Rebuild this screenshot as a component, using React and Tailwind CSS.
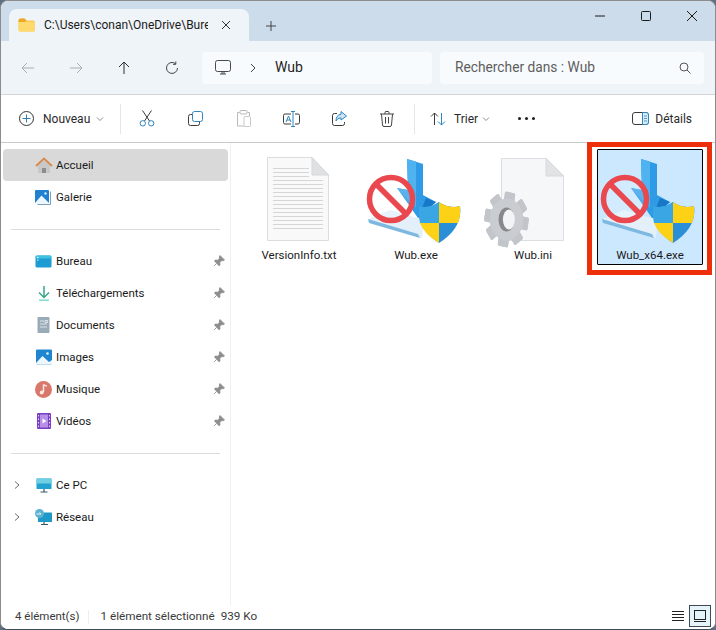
import React from "react";

const S = ({ children, w = 16, h = 16, vb, className = "" }) => (
  <svg width={w} height={h} viewBox={vb || `0 0 ${w} ${h}`} fill="none" className={`shrink-0 ${className}`}>{children}</svg>
);

const Folder = () => (
  <S w={17} h={14}>
    <path d="M0.5 2.5q0-2 2-2h4l2 2h6.5q2 0 2 2v7.5q0 1.500-2 1.500h-12.500q-2 0-2-1.500z" fill="#fbc84b" />
    <path d="M0.500 4h16.500v8q0 1.500-2 1.500h-12.500q-2 0-2-1.500z" fill="#fdd96e" />
    <path d="M0.500 2.500q0-2 2-2h4l2 2-2 1.500h-6z" fill="#e9a92e" />
  </S>
);

const ExeIcon = () => (
  <svg width="96" height="88" viewBox="0 0 96 88" className="shrink-0">
    <path d="M2 61 L24 52 L58 62 L56 80 L50 78 Z" fill="#e3f0f9" />
    <path d="M2 61 L52 76 L54 80 L3 65 Z" fill="#7db8e0" />
    <path d="M41 1 L57 6 L57 37 L70 44 L52 60 L31 30 L42 32 Z" fill="#2f9be6" />
    <path d="M41 1 L50 3.500 L50 50 L42 32 Z" fill="#4fb3f0" />
    <path d="M31 30 L42 32 L50 50 Z" fill="#3fa6ea" />
    <path d="M52 60 L70 44 L60 40 Z" fill="#1878c8" />
    <circle cx="25" cy="41" r="21.500" fill="#ffffff" fillOpacity="0.15" stroke="#e8484e" strokeWidth="5.500" />
    <path d="M10 26 L40 56" stroke="#e8484e" strokeWidth="5.500" />
    <path d="M73 44 Q83 51 94 48 Q97 70 73 85 Q50 70 53 48 Q63 51 73 44 Z" fill="#2a8fd6" />
    <path d="M73 44 Q83 51 94 48 Q95 57 92 65 L73 65 Z" fill="#fcd116" />
    <path d="M73 65 L54 65 Q58 76 73 85 Z" fill="#fcd116" />
    <path d="M73 44 Q63 51 53 48 Q52 57 54 65 L73 65 Z" fill="#3aa6e4" />
  </svg>
);

const TxtIcon = () => (
  <svg width="62" height="84" viewBox="0 0 62 84" className="shrink-0">
    <path d="M0.500 0.500H45L61.500 18V83.500H0.500Z" fill="#f9f9fa" stroke="#dadcde" />
    <path d="M45 0.500V18H61.500Z" fill="#e0e1e3" stroke="#d5d7d9" />
    {[11, 15, 19, 23, 27, 31, 35, 39, 43, 47, 51, 55, 59, 63, 67, 71].map((y) => (
      <path key={y} d={`M6 ${y + 0.5}H${y < 22 ? 42 : 56}`} stroke="#d4d6d8" strokeWidth="1" />
    ))}
  </svg>
);

const IniIcon = () => (
  <svg width="80" height="90" viewBox="0 0 80 90" className="shrink-0">
    <path d="M17.500 0.500H62L79.500 18V82.500H17.500Z" fill="#f6f7f9" stroke="#dcdee1" />
    <path d="M62 0.500V18H79.500Z" fill="#e2e3e5" stroke="#d6d8db" />
    <g transform="translate(22.500 61.500) scale(0.8 1)">
      {[0, 45, 90, 135, 180, 225, 270, 315].map((a) => (
        <rect key={a} x="-6.500" y="-27.500" width="13" height="55" rx="2" fill="#c2c6cb" transform={`rotate(${a + 10})`} />
      ))}
      <circle r="21" fill="#c9ccd1" />
      <ellipse rx="10" ry="12" fill="#85888d" />
      <ellipse cx="3" rx="7.500" ry="10" fill="#f3f4f6" />
    </g>
  </svg>
);

const Pin = () => (
  <S w={12} h={12}>
    <path d="M7 0.500L11.500 5 10 5.800 8.700 5.500 6.800 7.500 7 10 6 10.800 1.500 6 2.300 5 4.700 5.200 6.500 3.300 6.200 2Z M3.500 8.500L1 11" fill="#8d8d8d" stroke="#8d8d8d" strokeWidth="0.800" />
  </S>
);

const Chevron = () => (
  <S w={10} h={10}><path d="M3 1.500L7 5 3 8.500" stroke="#6b6b6b" strokeWidth="1" /></S>
);

const Caret = () => (
  <S w={8} h={6}><path d="M1 1.500L4 4.500 7 1.500" stroke="#8a8a8a" strokeWidth="1" /></S>
);

const Home = () => (
  <S w={18} h={17}>
    <path d="M3 8.500V16H15V8.500L9 3Z" fill="#c8c8c8" />
    <path d="M7 11h4v5H7z" fill="#8d8d8d" />
    <path d="M1 9L9 1.500 17 9" stroke="#d98a4e" strokeWidth="2" />
  </S>
);

const Gallery = () => (
  <S w={17} h={17}>
    <path d="M15.500 2.500V15.500H2.500" stroke="#7aa0bd" strokeWidth="1" />
    <rect x="0" y="1" width="14" height="14" rx="1" fill="#1f81cf" />
    <path d="M0 14L6.500 6.500 14 14V15H0Z" fill="#eef7fd" />
    <circle cx="10.500" cy="4.500" r="1.200" fill="#d7eefc" />
  </S>
);

const Desktop = () => (
  <S w={17} h={13}>
    <rect x="0.500" y="0.500" width="16" height="12" rx="1.500" fill="#1d9cd3" />
    <rect x="0.500" y="0.500" width="16" height="3" rx="1.500" fill="#3fc1e0" />
    <path d="M2 2h1.500v1H2zM2 4.500h1.500v1H2z" fill="#e5f7fc" />
  </S>
);

const Download = () => (
  <S w={16} h={16}>
    <path d="M8 1V12M3 7.500L8 12.500 13 7.500" stroke="#39a889" strokeWidth="1.500" />
    <path d="M3 15.200H13" stroke="#6ed6c8" strokeWidth="1.300" />
  </S>
);

const Doc = () => (
  <S w={13} h={16}>
    <rect x="0.500" width="12" height="16" rx="1" fill="#9aabb8" />
    <path d="M3 4h4M3 7h7M3 10h7M8 3.500h2.500v2H8z" stroke="#e4eaee" strokeWidth="0.900" />
  </S>
);

const Picture = () => (
  <S w={16} h={16}>
    <rect width="16" height="15" y="0.500" rx="1" fill="#1f85d1" />
    <path d="M0 14L6.500 7 13 13 16 11V15.500H0Z" fill="#eef7fd" />
    <circle cx="11.500" cy="4.500" r="1.300" fill="#dff1fc" />
  </S>
);

const Music = () => (
  <S w={17} h={17}>
    <circle cx="8.500" cy="8.500" r="8.500" fill="#d9776a" />
    <path d="M8.500 3.500V11M8.500 3.500Q10.500 5 12 5" stroke="#fbe9e6" strokeWidth="1.500" />
    <circle cx="6.700" cy="11.500" r="2" fill="#fbe9e6" />
  </S>
);

const Video = () => (
  <S w={14} h={16}>
    <rect width="14" height="16" rx="1" fill="#7a3fc4" />
    <rect x="3" y="1.500" width="8" height="13" fill="#b68fe8" />
    <path d="M5.500 5.500L9.500 8 5.500 10.500Z" fill="#ffffff" />
    <path d="M1 2h1v1.500H1zM1 5.500h1V7H1zM1 9h1v1.500H1zM1 12.500h1V14H1zM12 2h1v1.500h-1zM12 5.500h1V7h-1zM12 9h1v1.500h-1zM12 12.500h1V14h-1z" fill="#e6d8f8" />
  </S>
);

const Pc = () => (
  <S w={16} h={15}>
    <rect x="0.500" y="0.500" width="15" height="10.500" rx="0.500" fill="#22a3cf" />
    <rect x="0.500" y="0.500" width="15" height="5" fill="#6fd0e4" />
    <path d="M8 11V14M4.500 14H11.500" stroke="#3d5666" strokeWidth="1.200" />
  </S>
);

const Network = () => (
  <S w={17} h={16}>
    <rect x="3" y="3.500" width="14" height="9.500" rx="0.500" fill="#1e99c8" />
    <path d="M9 13V15.500M6 15.500H13" stroke="#3d5666" strokeWidth="1.200" />
    <circle cx="4.500" cy="4.500" r="4.500" fill="#5cb3cf" />
    <path d="M1.500 5H6L4.500 3.500" stroke="#e6f6fa" strokeWidth="1" />
  </S>
);

const NavRow = ({ icon, label, pin, selected, expand }) => (
  <div className={`h-8 flex items-center rounded-sm ${selected ? "bg-[#d9d9d9]" : ""}`}>
    <div className="w-[9px] shrink-0" />
    <div className="w-[10px] shrink-0">{expand && <Chevron />}</div>
    <div className="w-[17px] shrink-0 ml-[13px] flex justify-center">{icon}</div>
    <span className="ml-[4px] pt-[1px] flex-1 text-[11.5px] text-[#1a1a1a]">{label}</span>
    {pin && <span className="mr-[3px]"><Pin /></span>}
  </div>
);

const ToolBtn = ({ children }) => (
  <div className="w-12 h-8 flex items-center justify-center shrink-0">{children}</div>
);

const FileItem = ({ icon, name, selected, topClass }) => (
  <div className={`w-[106px] h-[116px] flex flex-col items-center rounded-[1px] border ${selected ? "bg-[#cce8ff] border-black" : "border-transparent"}`}>
    <div className={`h-[96px] flex justify-center ${topClass}`}>{icon}</div>
    <span className="mt-[1px] text-[11.5px] leading-4 text-[#1a1a1a]">{name}</span>
  </div>
);

export default function App() {
  return (
    <div className="relative w-[716px] h-[630px] overflow-hidden bg-[#5f6f7f] font-['Roboto',sans-serif]">
      <div className="w-full h-full rounded-[8px] overflow-hidden border border-[#8c8c8c] border-b-[#3d4a57] flex flex-col bg-white">
        {/* Title bar */}
        <div className="h-[40px] shrink-0 bg-[#cddcea] flex items-end">
          <div className="ml-[8px] w-[240px] h-[32px] rounded-t-[8px] bg-[#eff4f9] flex items-center shrink-0">
            <span className="ml-[9px]"><Folder /></span>
            <span className="ml-[9px] w-[164px] overflow-hidden whitespace-nowrap text-[12px] text-[#1a1a1a]">C:\Users\conan\OneDrive\Bureau\Wub</span>
            <span className="ml-[13px]">
              <S w={10} h={10}><path d="M1 1L9 9M9 1L1 9" stroke="#333" strokeWidth="1" /></S>
            </span>
          </div>
          <div className="ml-[17px] mb-[10px]">
            <S w={10} h={10}><path d="M5 0V10M0 5H10" stroke="#444" strokeWidth="1" /></S>
          </div>
          <div className="ml-auto self-start flex items-center h-[30px]">
            <div className="w-[46px] flex justify-center"><S w={10} h={10}><path d="M0 5H10" stroke="#1a1a1a" strokeWidth="1" /></S></div>
            <div className="w-[46px] flex justify-center"><S w={10} h={10}><rect x="0.500" y="0.500" width="9" height="9" rx="1" stroke="#1a1a1a" /></S></div>
            <div className="w-[46px] flex justify-center"><S w={10} h={10}><path d="M0 0L10 10M10 0L0 10" stroke="#1a1a1a" strokeWidth="1" /></S></div>
          </div>
        </div>

        {/* Nav bar */}
        <div className="h-[54px] shrink-0 bg-[#eff4f9] border-b border-[#d3d6d9] flex items-center">
          <div className="w-[48px] ml-[3px] flex justify-center"><S w={14} h={12}><path d="M13 6H1M6 1L1 6 6 11" stroke="#a9afb5" strokeWidth="1" /></S></div>
          <div className="w-[48px] flex justify-center"><S w={14} h={12}><path d="M1 6H13M8 1L13 6 8 11" stroke="#a9afb5" strokeWidth="1" /></S></div>
          <div className="w-[48px] flex justify-center"><S w={12} h={14}><path d="M6 13V1M1 6L6 1 11 6" stroke="#2f2f2f" strokeWidth="1" /></S></div>
          <div className="w-[48px] flex justify-center"><S w={14} h={14}><path d="M12.500 7A5.500 5.500 0 1 1 10.500 2.700M10.800 0.500V3.300H8" stroke="#444" strokeWidth="1" /></S></div>
          <div className="ml-[6px] w-[230px] h-8 rounded-[4px] bg-[#f8fbfd] flex items-center">
            <span className="ml-[13px]">
              <S w={16} h={15}>
                <rect x="0.500" y="0.500" width="15" height="11" rx="2" stroke="#4a4a4a" />
                <path d="M5 14H11M7 12V14M9 12V14" stroke="#4a4a4a" />
              </S>
            </span>
            <span className="ml-[18px]"><S w={8} h={10}><path d="M2 1L6 5 2 9" stroke="#444" strokeWidth="1" /></S></span>
            <span className="ml-[18px] text-[14px] text-[#1f1f1f]">Wub</span>
          </div>
          <div className="ml-[8px] w-[264px] h-8 rounded-[4px] bg-[#f8fbfd] flex items-center">
            <span className="ml-[15px] text-[13.75px] text-[#5e5e5e]">Rechercher dans : Wub</span>
            <span className="ml-auto mr-[13px]">
              <S w={12} h={12}><circle cx="5" cy="5" r="4" stroke="#555" /><path d="M8 8L11.500 11.500" stroke="#555" /></S>
            </span>
          </div>
        </div>

        {/* Toolbar */}
        <div className="h-[48px] shrink-0 bg-white border-b border-[#c9c9c9] flex items-center">
          <span className="ml-[18px]">
            <S w={15} h={15}><circle cx="7.500" cy="7.500" r="7" stroke="#333" /><path d="M7.500 3.500V11.500M3.500 7.500H11.500" stroke="#2f7fb5" /></S>
          </span>
          <span className="ml-[9px] w-[47px] whitespace-nowrap text-[12px] text-[#2a2a2a]">Nouveau</span>
          <span className="ml-[6px]"><Caret /></span>
          <div className="ml-[16px] mr-[2px] w-px h-[30px] bg-[#e6e6e6]" />
          <ToolBtn>
            <S w={16} h={17}>
              <path d="M3.500 0.500L10.500 11M12.500 0.500L5.500 11" stroke="#3a3a3a" strokeWidth="1" />
              <circle cx="3.800" cy="13.300" r="2.700" stroke="#2f86bd" /><circle cx="12.200" cy="13.300" r="2.700" stroke="#2f86bd" />
            </S>
          </ToolBtn>
          <ToolBtn>
            <S w={15} h={15}>
              <rect x="4.500" y="0.500" width="10" height="10" rx="2" stroke="#2f86bd" />
              <path d="M4 3.500H2.500Q0.500 3.500 0.500 5.500V12.500Q0.500 14.500 2.500 14.500H9.500Q11.500 14.500 11.500 12.500V11" stroke="#3a3a3a" />
            </S>
          </ToolBtn>
          <ToolBtn>
            <S w={15} h={17}>
              <path d="M3.500 2.500H1.500V16H8M11.500 2.500H13.500V6" stroke="#b9b9b9" />
              <rect x="4" y="0.500" width="7" height="3.500" rx="1" stroke="#b9b9b9" />
              <rect x="8" y="6.500" width="6.500" height="10" rx="1" stroke="#c8c8c8" />
            </S>
          </ToolBtn>
          <ToolBtn>
            <S w={17} h={16}>
              <path d="M8 3H2Q0.500 3 0.500 4.500V11.500Q0.500 13 2 13H8M12 3H15Q16.500 3 16.500 4.500V11.500Q16.500 13 15 13H12" stroke="#3a3a3a" />
              <path d="M10 0.500V15.500M8 0.500H12M8 15.500H12" stroke="#2f86bd" />
              <path d="M3 11L5.500 5 8 11M4 9H7" stroke="#2f86bd" />
            </S>
          </ToolBtn>
          <ToolBtn>
            <S w={15} h={15}>
              <path d="M5 2.500H2.500Q0.500 2.500 0.500 4.500V12.500Q0.500 14.500 2.500 14.500H10.500Q12.500 14.500 12.500 12.500V11" stroke="#3a3a3a" />
              <path d="M9 0.500L14.500 5 9 9V6.800Q5.500 6.800 4 10Q4 4 9 3.300Z" stroke="#2f86bd" fill="#cfe6f5" />
            </S>
          </ToolBtn>
          <ToolBtn>
            <S w={14} h={16}>
              <path d="M0 3H14M5 3V1.500Q5 0.500 6 0.500H8Q9 0.500 9 1.500V3M1.500 3L2.500 14Q2.600 15.500 4 15.500H10Q11.400 15.500 11.500 14L12.500 3M5.500 6V12.500M8.500 6V12.500" stroke="#444" />
            </S>
          </ToolBtn>
          <div className="ml-[3px] w-px h-[30px] bg-[#e6e6e6]" />
          <span className="ml-[15px]">
            <S w={16} h={14}>
              <path d="M4.500 13V1M1 4.500L4.500 1 8 4.500" stroke="#3a3a3a" />
              <path d="M11.500 1V13M8 9.500L11.500 13 15 9.500" stroke="#2f86bd" />
            </S>
          </span>
          <span className="ml-[8px] w-[23px] text-[12px] text-[#2a2a2a]">Trier</span>
          <span className="ml-[5px]"><Caret /></span>
          <span className="ml-[28px]">
            <S w={17} h={3}><circle cx="1.500" cy="1.500" r="1.500" fill="#1f1f1f" /><circle cx="8.500" cy="1.500" r="1.500" fill="#1f1f1f" /><circle cx="15.500" cy="1.500" r="1.500" fill="#1f1f1f" /></S>
          </span>
          <span className="ml-auto">
            <S w={17} h={13}>
              <rect x="0.500" y="0.500" width="16" height="12" rx="2.500" stroke="#3a3a3a" />
              <path d="M10.500 0.500H14Q16.500 0.500 16.500 3V10Q16.500 12.500 14 12.500H10.500Z" fill="#d8edf8" stroke="#2f86bd" />
              <path d="M12 4H15M12 6.500H15M12 9H15" stroke="#2f86bd" strokeWidth="0.800" />
            </S>
          </span>
          <span className="ml-[6px] mr-[23px] text-[12px] text-[#2a2a2a]">Détails</span>
        </div>

        {/* Main */}
        <div className="flex-1 min-h-0 flex">
          <div className="w-[230px] shrink-0 border-r border-[#f0f0f0] pt-[6px] pl-[2px] pr-[2px] relative">
            <NavRow icon={<Home />} label="Accueil" selected />
            <NavRow icon={<Gallery />} label="Galerie" />
            <div className="mt-[16px] mb-[15px] ml-[8px] mr-[8px] h-px bg-[#dcdcdc]" />
            <NavRow icon={<Desktop />} label="Bureau" pin />
            <NavRow icon={<Download />} label="Téléchargements" pin />
            <NavRow icon={<Doc />} label="Documents" pin />
            <NavRow icon={<Picture />} label="Images" pin />
            <NavRow icon={<Music />} label="Musique" pin />
            <NavRow icon={<Video />} label="Vidéos" pin />
            <div className="mt-[16px] mb-[15px] ml-[8px] mr-[8px] h-px bg-[#dcdcdc]" />
            <NavRow icon={<Pc />} label="Ce PC" expand />
            <NavRow icon={<Network />} label="Réseau" expand />
          </div>
          <div className="flex-1 pt-[6px] pl-[15px] flex items-start gap-[11px]">
            <FileItem icon={<TxtIcon />} name="VersionInfo.txt" topClass="items-start pt-[7px] pr-[2px]" />
            <FileItem icon={<ExeIcon />} name="Wub.exe" topClass="items-end pr-[4px]" />
            <FileItem icon={<IniIcon />} name="Wub.ini" topClass="items-start pt-[8px] pr-[18px]" />
            <FileItem icon={<ExeIcon />} name="Wub_x64.exe" topClass="items-end pr-[4px]" selected />
          </div>
        </div>

        {/* Status bar */}
        <div className="h-[24px] shrink-0 flex items-center bg-white">
          <span className="ml-[14px] text-[11.5px] text-[#3a3a3a]">4 élément(s)</span>
          <div className="ml-[9px] w-px h-[14px] bg-[#eeeeee]" />
          <span className="ml-[11px] text-[11.7px] text-[#3a3a3a]">1 élément sélectionné</span>
          <span className="ml-[6px] text-[11.7px] text-[#3a3a3a]">939 Ko</span>
          <div className="ml-auto flex items-center mr-[4px] mb-[2px]">
            <div className="mr-[5px]">
              <S w={12} h={11}><path d="M0 0.500H12M0 3.500H12M0 6.500H12M0 9.500H12" stroke="#222" /></S>
            </div>
            <div className="w-[22px] h-[22px] flex items-center justify-center bg-[#e5f3fb] border border-[#3f4a55]">
              <S w={12} h={12}><rect x="0.500" y="0.500" width="11" height="9" stroke="#222" /><path d="M0 11.500H12" stroke="#222" /></S>
            </div>
          </div>
        </div>
      </div>

      {/* Annotation */}
      <div className="absolute left-[587px] top-[142px] w-[125px] h-[133px] border-[5px] border-[#ee2f0c] pointer-events-none" />
    </div>
  );
}
